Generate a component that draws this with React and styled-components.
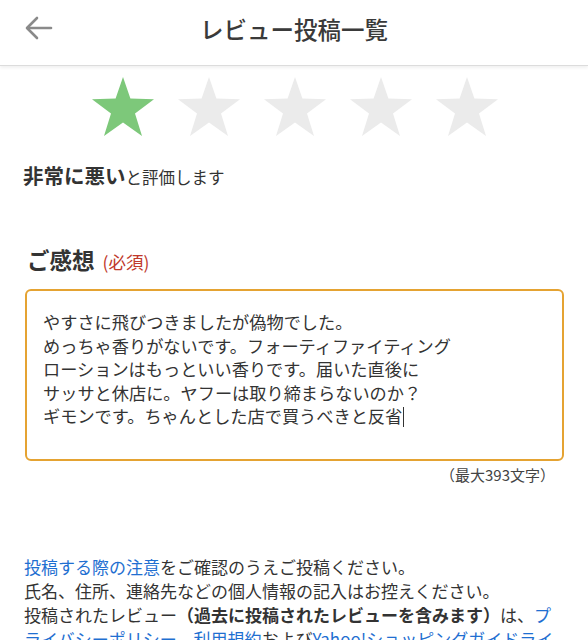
import styled, { createGlobalStyle } from 'styled-components';

const GlobalStyle = createGlobalStyle`
    html, body {
        margin: 0;
        padding: 0;
        background: #fff;
    }
    body {
        font-family: "Noto Sans CJK JP", "Noto Sans", sans-serif;
        color: #333;
        -webkit-font-smoothing: antialiased;
    }
`;

const Page = styled.div`
    width: 588px;
    height: 640px;
    overflow: hidden;
`;

const Header = styled.header`
    position: relative;
    height: 65px;
    display: flex;
    align-items: center;
    justify-content: center;
    border-bottom: 1px solid #dcdcdc;
    box-shadow: 0 2px 3px rgba(0, 0, 0, 0.06);
`;

const BackButton = styled.button`
    position: absolute;
    left: 22px;
    top: 14px;
    width: 34px;
    height: 28px;
    padding: 0;
    border: 0;
    background: transparent;
    display: flex;
    align-items: center;
    justify-content: center;
`;

const Title = styled.h1`
    margin: 0 0 8px;
    font-size: 23.5px;
    font-weight: 500;
    color: #3a3a3a;
`;

const StarRow = styled.div`
    display: flex;
    justify-content: center;
    gap: 24px;
    padding: 11px 0 0 2px;
`;

const StarIcon = styled.svg`
    width: 62px;
    height: 60px;
    display: block;
    fill: ${({ $on }) => ($on ? '#7dc87a' : '#ebebeb')};
`;

const RatingText = styled.p`
    margin: 25px 0 0 23px;
    font-size: 16.5px;
    line-height: 26px;
    color: #333;

    strong {
        font-size: 20.5px;
        font-weight: 700;
    }
`;

const Section = styled.section`
    padding: 0 24px 0 25px;
`;

const Heading = styled.h2`
    margin: 54px 0 12px 2px;
    font-size: 22.5px;
    font-weight: 700;
    line-height: 30px;
    color: #333;
`;

const Required = styled.span`
    margin-left: 8px;
    font-size: 17.5px;
    font-weight: 400;
    color: #c0392b;
`;

const ReviewBox = styled.div`
    box-sizing: border-box;
    height: 172px;
    padding: 19px 16px 0;
    border: 2px solid #e5a332;
    border-radius: 6px;
    font-size: 17.2px;
    line-height: 23.6px;
    color: #333;
    white-space: pre-line;
`;

const Caret = styled.span`
    display: inline-block;
    width: 1px;
    height: 20px;
    margin-left: 1px;
    vertical-align: -4px;
    background: #333;
`;

const Counter = styled.p`
    margin: 4px 9px 0 0;
    text-align: right;
    font-size: 15px;
    line-height: 20px;
    color: #444;
`;

const Notes = styled.div`
    margin-top: 70px;
    padding: 0 24px;
    font-size: 17px;
    line-height: 24px;
    color: #333;

    p {
        margin: 0;
    }

    strong {
        font-weight: 700;
    }
`;

const Link = styled.a`
    color: #1f6fd1;
    text-decoration: none;
`;

const Star = ({ on }) => (
    <StarIcon $on={on} viewBox="0 0 62 60">
        <polygon points="31,0 38.4,21.6 62,22.2 43,36.5 50,59 31,45.6 12,59 19,36.5 0,22.2 23.6,21.6" />
    </StarIcon>
);

const reviewText = `やすさに飛びつきましたが偽物でした。
めっちゃ香りがないです。フォーティファイティング
ローションはもっといい香りです。届いた直後に
サッサと休店に。ヤフーは取り締まらないのか？
ギモンです。ちゃんとした店で買うべきと反省`;

const App = () => {
    return (
        <Page>
            <GlobalStyle />
            <Header>
                <BackButton aria-label="戻る">
                    <svg width="28" height="24" viewBox="0 0 28 24" fill="none" stroke="#8a8a8a" strokeWidth="2.6" strokeLinecap="round" strokeLinejoin="round">
                        <path d="M26 12H3" />
                        <path d="M12 2L2 12l10 10" />
                    </svg>
                </BackButton>
                <Title>レビュー投稿一覧</Title>
            </Header>

            <StarRow>
                {[1, 2, 3, 4, 5].map((n) => (
                    <Star key={n} on={n <= 1} />
                ))}
            </StarRow>

            <RatingText>
                <strong>非常に悪い</strong>と評価します
            </RatingText>

            <Section>
                <Heading>
                    ご感想<Required>(必須)</Required>
                </Heading>
                <ReviewBox>
                    {reviewText}
                    <Caret />
                </ReviewBox>
                <Counter>（最大393文字）</Counter>
            </Section>

            <Notes>
                <p>
                    <Link href="#">投稿する際の注意</Link>をご確認のうえご投稿ください。
                </p>
                <p>氏名、住所、連絡先などの個人情報の記入はお控えください。</p>
                <p>
                    投稿されたレビュー<strong>（過去に投稿されたレビューを含みます）</strong>は、<Link href="#">プライバシーポリシー</Link>、<Link href="#">利用規約</Link>および<Link href="#">Yahoo!ショッピングガイドライン</Link>に基づき、掲載されます。
                </p>
            </Notes>
        </Page>
    );
};

export default App;
